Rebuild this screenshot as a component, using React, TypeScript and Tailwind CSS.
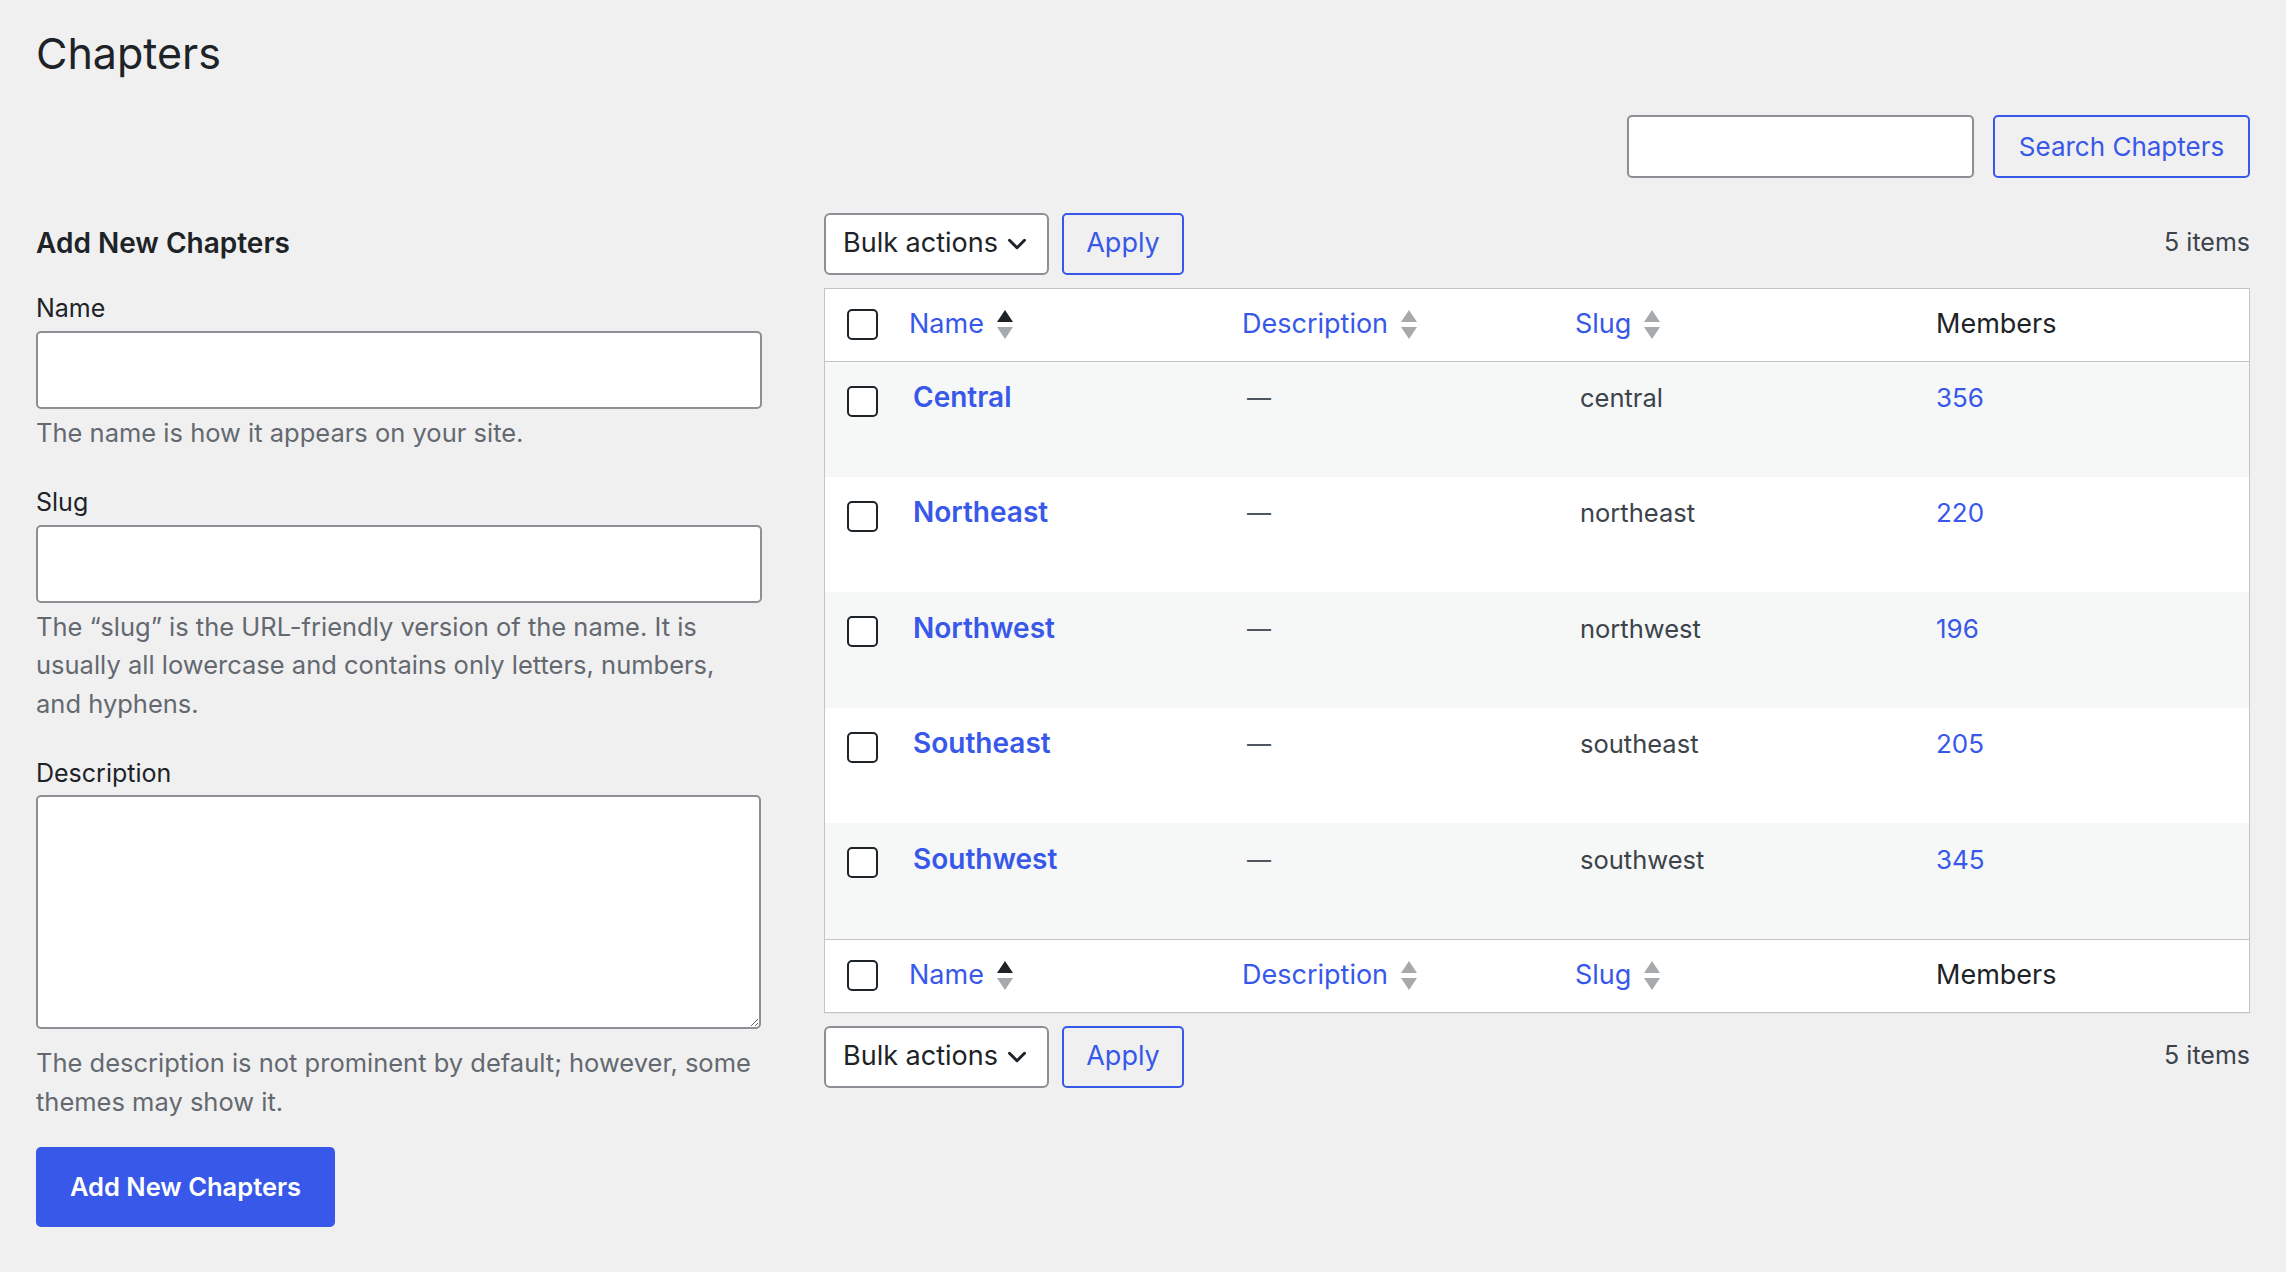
import { ChevronDown } from 'lucide-react'

const rows = [
  { name: 'Central', slug: 'central', members: 356 },
  { name: 'Northeast', slug: 'northeast', members: 220 },
  { name: 'Northwest', slug: 'northwest', members: 196 },
  { name: 'Southeast', slug: 'southeast', members: 205 },
  { name: 'Southwest', slug: 'southwest', members: 345 },
]

const cols = 'grid grid-cols-[75px_334px_333px_356px_1fr]'

function SortArrows({ active }: { active?: boolean }) {
  return (
    <svg width="18" height="31" viewBox="0 0 18 31" className="ml-[12px]">
      <path d="M9 1 L17 13 L1 13 Z" fill={active ? '#1d2327' : '#a7aaad'} />
      <path d="M1 18 L17 18 L9 30 Z" fill="#a7aaad" />
    </svg>
  )
}

function Checkbox() {
  return <div className="w-[31px] h-[31px] rounded-[5px] border-2 border-[#1d2327] bg-white" />
}

function HeaderRow({ top }: { top?: boolean }) {
  return (
    <div className={`${cols} h-[73px] items-center bg-white text-[27px] ${top ? 'border-b' : 'border-t'} border-[#c3c4c7]`}>
      <div className="pl-[22px] flex items-center">
        <Checkbox />
      </div>
      <div className="pl-[9px] flex items-center text-[#3858e9]">
        <span>Name</span>
        <SortArrows active />
      </div>
      <div className="pl-[8px] flex items-center text-[#3858e9]">
        <span>Description</span>
        <SortArrows />
      </div>
      <div className="pl-[8px] flex items-center text-[#3858e9]">
        <span>Slug</span>
        <SortArrows />
      </div>
      <div className="pl-[13px] text-[#1d2327]">Members</div>
    </div>
  )
}

function Toolbar() {
  return (
    <div className="flex items-center h-[62px] text-[27px]">
      <div className="flex items-center justify-between w-[225px] h-[62px] pl-[17px] pr-[18px] bg-white border-2 border-[#8c8f94] rounded-[6px] text-[#1d2327]">
        <span>Bulk actions</span>
        <ChevronDown size={30} strokeWidth={2.4} className="-mr-[3px]" />
      </div>
      <button className="ml-[13px] w-[122px] h-[62px] border-2 border-[#3858e9] rounded-[5px] text-[#3858e9]">
        Apply
      </button>
      <div className="ml-auto text-[25px] text-[#3c434a] -mt-[2px]">5 items</div>
    </div>
  )
}

export default function App() {
  return (
    <div className="min-h-screen bg-[#f0f0f1] pl-[36px] pr-[36px] font-['Inter',sans-serif] text-[#1d2327]">
      <h1 className="pt-[28px] text-[43px] leading-[1.2] font-normal">Chapters</h1>

      <div className="mt-[35px] flex justify-end gap-[19px]">
        <input className="w-[347px] h-[63px] bg-white border-2 border-[#8c8f94] rounded-[5px]" />
        <button className="w-[257px] h-[63px] border-2 border-[#3858e9] rounded-[5px] text-[26px] text-[#3858e9]">
          Search Chapters
        </button>
      </div>

      <div className="mt-[35px] flex gap-[62px]">
        {/* Add form */}
        <div className="w-[726px] shrink-0">
          <h2 className="pt-[14px] text-[28px] leading-[1.2] font-semibold">Add New Chapters</h2>

          <label className="block mt-[33px] text-[25px] leading-[30px]">Name</label>
          <input className="block mt-[8px] w-full h-[78px] bg-white border-2 border-[#8c8f94] rounded-[5px]" />
          <p className="mt-[5px] text-[25.5px] leading-[38.5px] text-[#646970]">The name is how it appears on your site.</p>

          <label className="block mt-[34px] text-[25px] leading-[30px]">Slug</label>
          <input className="block mt-[8px] w-full h-[78px] bg-white border-2 border-[#8c8f94] rounded-[5px]" />
          <p className="mt-[5px] text-[25.5px] leading-[38.5px] text-[#646970] pr-[20px]">
            The “slug” is the URL-friendly version of the name. It is usually all lowercase and contains only letters, numbers, and hyphens.
          </p>

          <label className="block mt-[35px] text-[25px] leading-[30px]">Description</label>
          <textarea className="block mt-[7px] w-[725px] h-[234px] bg-white border-2 border-[#8c8f94] rounded-[5px]" />
          <p className="mt-[15px] text-[25.5px] leading-[38.5px] text-[#646970]">
            The description is not prominent by default; however, some themes may show it.
          </p>

          <button className="mt-[26px] w-[299px] h-[80px] rounded-[5px] bg-[#3858e9] text-white text-[25.5px] font-semibold">
            Add New Chapters
          </button>
        </div>

        {/* List table */}
        <div className="flex-1 text-[26px]">
          <Toolbar />

          <div className="mt-[13px] border border-[#c3c4c7] shadow-[0_1px_1px_rgba(0,0,0,0.04)]">
            <HeaderRow top />
            {rows.map((r, i) => (
              <div
                key={r.name}
                className={`${cols} h-[115.4px] leading-[39px] ${i % 2 === 0 ? 'bg-[#f6f7f7]' : 'bg-white'}`}
              >
                <div className="pl-[22px] pt-[24px]">
                  <Checkbox />
                </div>
                <div className="pl-[13px] pt-[16.5px] text-[28px] font-semibold text-[#3858e9]">{r.name}</div>
                <div className="pl-[13px] pt-[16.5px] text-[24px] text-[#50575e]">—</div>
                <div className="pl-[13px] pt-[16.5px] text-[25.5px] text-[#3c434a]">{r.slug}</div>
                <div className="pl-[13px] pt-[16.5px] text-[#3858e9]">{r.members}</div>
              </div>
            ))}
            <HeaderRow />
          </div>

          <div className="mt-[13px]">
            <Toolbar />
          </div>
        </div>
      </div>
    </div>
  )
}
